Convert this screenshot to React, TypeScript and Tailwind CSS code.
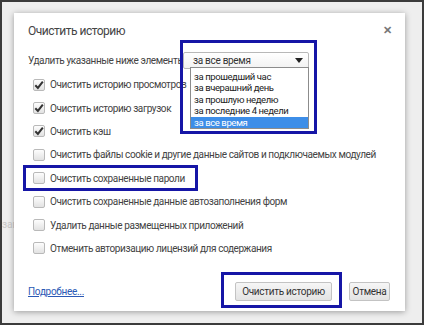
import React from "react"

const font = { fontFamily: 'Roboto, "Noto Sans", sans-serif' }

const items = [
  { label: "Очистить историю просмотров", checked: true },
  { label: "Очистить историю загрузок", checked: true },
  { label: "Очистить кэш", checked: true },
  { label: "Очистить файлы cookie и другие данные сайтов и подключаемых модулей", checked: false },
  { label: "Очистить сохраненные пароли", checked: false },
  { label: "Очистить сохраненные данные автозаполнения форм", checked: false },
  { label: "Удалить данные размещенных приложений", checked: false },
  { label: "Отменить авторизацию лицензий для содержания", checked: false },
]

const periods = ["за прошедший час", "за вчерашний день", "за прошлую неделю", "за последние 4 недели", "за все время"]

function Checkbox({ checked }: { checked: boolean }) {
  return (
    <div className="w-[12px] h-[12px] shrink-0 rounded-[2px] border border-[#b9b9b9] bg-gradient-to-b from-[#fdfdfd] to-[#e2e2e2] flex items-center justify-center">
      {checked && (
        <svg width="10" height="10" viewBox="0 0 10 10">
          <path d="M1.3 5.2 L3.9 7.9 L8.8 1.6" fill="none" stroke="#333" strokeWidth="2" />
        </svg>
      )}
    </div>
  )
}

export default function App() {
  return (
    <div className="relative w-[424px] h-[325px] overflow-hidden border-2 border-[#3b3b3b] bg-[#eeeeee] whitespace-nowrap" style={font}>
      {/* faded page behind the dialog */}
      <div className="absolute left-0 top-[215px] text-[10px] text-[#c8c8c8]">загрузк</div>

      <div className="absolute left-[12px] top-[11px] w-[391px] h-[298px] bg-white shadow-[0_1px_6px_rgba(0,0,0,0.35)] flex flex-col pl-[14px] pr-[14px]">
        <div className="flex items-center justify-between h-[18px] mt-[9px]">
          <span className="text-[12px] tracking-[-0.5px] text-[#444]">Очистить историю</span>
          <span className="text-[11px] font-bold text-[#777] mr-[-1px]">✕</span>
        </div>

        <div className="flex items-center h-[18px] mt-[11px] text-[10px] tracking-[-0.4px] text-[#444]">
          <span className="w-[155px]">Удалить указанные ниже элементы:</span>
          <div className="w-[126px] h-[17px] border border-[#b8b8b8] rounded-[2px] bg-gradient-to-b from-white to-[#f2f2f2] flex items-center justify-between pl-[9px] pr-[5px] text-[10px] tracking-[-0.3px] text-[#333]">
            <span>за все время</span>
            <svg width="8" height="5" viewBox="0 0 8 5"><path d="M0 0 H8 L4 5 Z" fill="#222" /></svg>
          </div>
        </div>

        <div className="flex flex-col mt-[4px]">
          {items.map((it) => (
            <div key={it.label} className="flex items-center h-[23.4px] pl-[5px] gap-[5px] text-[10px] tracking-[-0.4px] text-[#444]">
              <Checkbox checked={it.checked} />
              <span>{it.label}</span>
            </div>
          ))}
        </div>

        <div className="mt-auto mb-[10px] flex items-center justify-between h-[20px]">
          <span className="text-[10px] tracking-[-0.3px] text-[#2b59b5] underline">Подробнее...</span>
          <div className="flex items-center gap-[17px] mr-[1px]">
            <button className="w-[97px] h-[19px] border border-[#c3c3c3] rounded-[2px] bg-gradient-to-b from-[#f6f6f6] to-[#e3e3e3] text-[10px] tracking-[-0.3px] text-[#333]">Очистить историю</button>
            <button className="w-[41px] h-[19px] border border-[#c3c3c3] rounded-[2px] bg-gradient-to-b from-[#f6f6f6] to-[#e3e3e3] text-[10px] tracking-[-0.3px] text-[#333]">Отмена</button>
          </div>
        </div>
      </div>

      {/* open dropdown list */}
      <div className="absolute left-[188px] top-[65px] w-[119px] h-[62px] flex flex-col justify-end border border-[#8c8c8c] bg-white text-[9.5px] tracking-[-0.4px] text-[#222]">
        {periods.map((p, i) => (
          <div key={p} className={i === periods.length - 1 ? "h-[11.5px] leading-[11.5px] pl-[3px] bg-[#3d8ee8] text-white" : "h-[11.5px] leading-[11.5px] pl-[3px]"}>{p}</div>
        ))}
      </div>

      {/* blue annotation boxes */}
      <div className="absolute left-[178px] top-[38px] w-[137px] h-[94px] border-[3px] border-[#1616a6]" />
      <div className="absolute left-[21px] top-[163px] w-[175px] h-[26px] border-[3px] border-[#1616a6]" />
      <div className="absolute left-[219px] top-[270px] w-[121px] h-[36px] border-[3px] border-[#1616a6]" />
    </div>
  )
}
